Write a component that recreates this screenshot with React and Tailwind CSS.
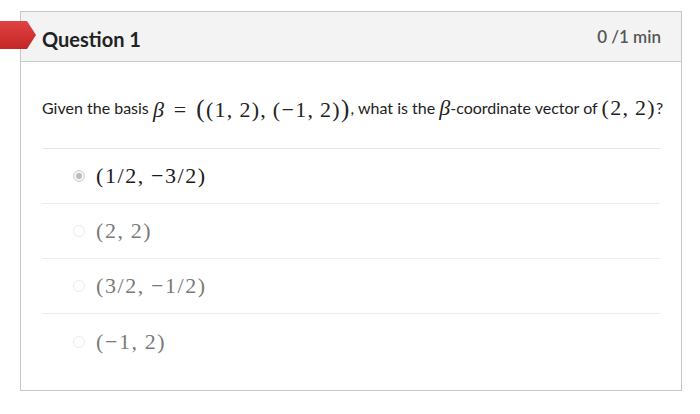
import React from 'react';

const options = [
  { label: '(1/2,\u2009−3/2)', selected: true },
  { label: '(2,\u20092)', selected: false },
  { label: '(3/2,\u2009−1/2)', selected: false },
  { label: '(−1,\u20092)', selected: false },
];

const mathFont = { fontFamily: '"Liberation Serif", "DejaVu Serif", serif' };

function Radio({ checked }) {
  return (
    <span
      className={`flex h-[12px] w-[12px] items-center justify-center rounded-full border ${
        checked ? 'border-[#d0d0d0] bg-[#f4f4f4]' : 'border-[#ececec] bg-white'
      }`}
    >
      {checked && <span className="h-[6px] w-[6px] rounded-full bg-[#bdbdbd]" />}
    </span>
  );
}

export default function App() {
  return (
    <div className="min-h-screen bg-white pt-[11px] pl-[20px]" style={{ fontFamily: 'Lato, "Open Sans", sans-serif' }}>
      <div className="relative w-[662px] h-[380px] border border-[#c6c6c6] bg-white">
        {/* red marker */}
        <svg className="absolute left-[-21px] top-[9px]" width="37" height="28" viewBox="0 0 37 28">
          <defs>
            <linearGradient id="tag" x1="0" y1="0" x2="0" y2="1">
              <stop offset="0" stopColor="#e04343" />
              <stop offset="1" stopColor="#c42525" />
            </linearGradient>
          </defs>
          <path d="M0 0 H27 L36 14 L27 28 H0 Z" fill="url(#tag)" />
        </svg>

        {/* header */}
        <div className="flex h-[50px] items-center justify-between border-b border-[#cdcdcd] bg-[#f3f3f3] pl-[21px] pr-[20px]">
          <h2 className="text-[20px] font-bold text-[#222] pt-[4px]">Question 1</h2>
          <span className="text-[17px] font-semibold text-[#565656]">0 /1 min</span>
        </div>

        <div className="px-[21px]">
          {/* question */}
          <div className="flex h-[87px] items-center border-b border-[#e6e6e6] pt-[6px] text-[16px] text-[#222] whitespace-nowrap">
            <span>Given the basis&nbsp;</span>
            <span style={mathFont} className="text-[22px] leading-none">
              <i>β</i>
              <span className="mx-[10px]">=</span>
              <span className="tracking-[1.3px]">
                <span className="text-[25px]">(</span>(1,{'\u2009'}2),{'\u2009'}(−1,{'\u2009'}2)<span className="text-[25px]">)</span>
              </span>
            </span>
            <span>, what is the&nbsp;</span>
            <i style={mathFont} className="text-[22px] leading-none">β</i>
            <span>-coordinate vector of&nbsp;</span>
            <span style={mathFont} className="text-[22px] leading-none tracking-[1.3px]">(2,{'\u2009'}2)</span>
            <span>?</span>
          </div>

          {/* options */}
          {options.map((opt, i) => (
            <div
              key={i}
              className={`flex h-[55px] items-center gap-[11px] pl-[31px] ${
                i < options.length - 1 ? 'border-b border-[#ececec]' : ''
              }`}
            >
              <Radio checked={opt.selected} />
              <span
                style={mathFont}
                className={`text-[22px] leading-none tracking-[1.6px] ${opt.selected ? 'text-[#1a1a1a]' : 'text-[#7a7a7a]'}`}
              >
                {opt.label}
              </span>
            </div>
          ))}
        </div>
      </div>
    </div>
  );
}
